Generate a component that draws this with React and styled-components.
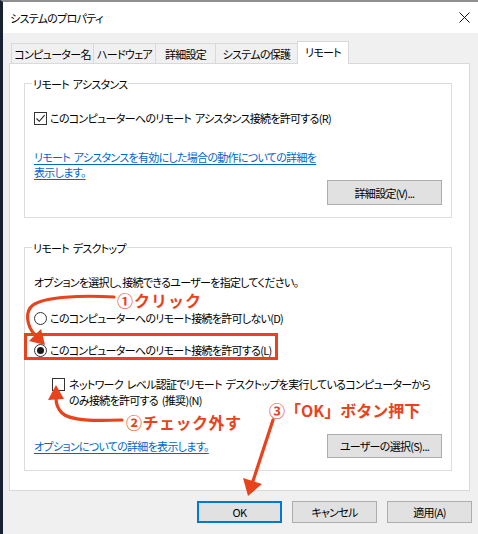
import React from 'react';
import styled, { createGlobalStyle } from 'styled-components';

const Global = createGlobalStyle`
  html, body { margin: 0; padding: 0; background: #f0f0f0; }
  body {
    font-family: "Noto Sans CJK JP", "Noto Sans", sans-serif;
    font-size: 11px;
    color: #000;
  }
  #root { width: 478px; height: 534px; overflow: hidden; }
`;

const Screen = styled.div`
  position: relative;
  width: 478px;
  height: 534px;
  overflow: hidden;
`;

const Window = styled.div`
  box-sizing: border-box;
  width: 100%;
  height: 100%;
  border-left: 3px solid #17212f;
  border-top: 2px solid #8f8f8f;
  background: #f0f0f0;
  display: flex;
  flex-direction: column;
  font-size: 11px;
  letter-spacing: -0.7px;
  word-spacing: 2px;
  font-feature-settings: "palt";
`;

const TitleBar = styled.div`
  height: 31px;
  flex-shrink: 0;
  background: #fff;
  display: flex;
  align-items: center;
  justify-content: space-between;
  padding: 0 8px 0 7px;
`;

const Title = styled.span`
  font-size: 11px;
  line-height: 16px;
`;

const Body = styled.div`
  flex: 1;
  display: flex;
  flex-direction: column;
  padding: 8px 8px 0 6px;
`;

const TabStrip = styled.div`
  display: flex;
  align-items: flex-end;
  height: 22px;
  margin-left: 2px;
  position: relative;
  z-index: 2;
`;

const Tab = styled.div`
  box-sizing: border-box;
  width: ${p => p.$w}px;
  height: ${p => (p.$active ? 23 : 20)}px;
  margin-bottom: ${p => (p.$active ? -1 : 0)}px;
  margin-left: -1px;
  border: 1px solid #d9d9d9;
  border-bottom: none;
  background: ${p => (p.$active ? '#fff' : '#f0f0f0')};
  display: flex;
  align-items: center;
  justify-content: center;
  line-height: 16px;
  white-space: nowrap;
  padding-bottom: ${p => (p.$active ? 3 : 0)}px;
  &:first-child { margin-left: 0; }
`;

const Panel = styled.div`
  box-sizing: border-box;
  background: #fff;
  border: 1px solid #d9d9d9;
  padding: 19px 17px 19px 14px;
  display: flex;
  flex-direction: column;
  gap: 29px;
  position: relative;
  z-index: 1;
`;

const Group = styled.div`
  border: 1px solid #dcdcdc;
  padding: 0 9px ${p => p.$pb}px 9px;
  display: flex;
  flex-direction: column;
`;

const Legend = styled.div`
  align-self: flex-start;
  margin: -8px 0 0 -2px;
  padding: 0 1px;
  background: #fff;
  line-height: 16px;
  white-space: nowrap;
`;

const Row = styled.div`
  display: flex;
  align-items: ${p => p.$align || 'center'};
  justify-content: ${p => p.$justify || 'flex-start'};
  gap: ${p => p.$gap ?? 3}px;
  margin-top: ${p => p.$mt || 0}px;
  margin-left: ${p => p.$ml || 0}px;
  line-height: ${p => p.$lh || 16}px;
  white-space: nowrap;
`;

const Text = styled.div`
  line-height: 16px;
  margin-top: ${p => p.$mt || 0}px;
  white-space: nowrap;
`;

const Box = styled.span`
  box-sizing: border-box;
  width: 13px;
  height: 13px;
  flex-shrink: 0;
  border: 1px solid #333;
  background: #fff;
  display: inline-flex;
  align-items: center;
  justify-content: center;
  margin-top: ${p => p.$mt || 0}px;
`;

const Radio = styled.span`
  box-sizing: border-box;
  width: 13px;
  height: 13px;
  flex-shrink: 0;
  border: 1px solid #333;
  border-radius: 50%;
  background: #fff;
  display: inline-flex;
  align-items: center;
  justify-content: center;
  &::after {
    content: "";
    width: 7px;
    height: 7px;
    border-radius: 50%;
    background: ${p => (p.$on ? '#1a1a1a' : 'transparent')};
  }
`;

const Link = styled.a`
  color: #0066cc;
  text-decoration: underline;
  text-underline-offset: 2px;
  line-height: 15px;
  margin-top: ${p => p.$mt || 0}px;
  display: block;
  white-space: nowrap;
`;

const Button = styled.button`
  box-sizing: border-box;
  width: ${p => p.$w}px;
  height: ${p => p.$h || 24}px;
  background: #e1e1e1;
  border: ${p => (p.$default ? '2px solid #0078d7' : '1px solid #adadad')};
  font-family: inherit;
  font-size: 11px;
  letter-spacing: inherit;
  font-feature-settings: "palt";
  color: #000;
  padding: 0;
  margin-top: ${p => p.$mt || 0}px;
  align-self: ${p => p.$self || 'auto'};
`;

const HighlightBox = styled.div`
  box-sizing: border-box;
  width: 254px;
  height: 27px;
  margin: 7px 0 0 -10px;
  border: 3px solid #e8431c;
  padding: 7px 0 0 7px;
`;

const Footer = styled.div`
  display: flex;
  justify-content: flex-end;
  gap: 10px;
  margin: 10px -2px 0 0;
`;

const Overlay = styled.svg`
  position: absolute;
  left: 0;
  top: 0;
  pointer-events: none;
  z-index: 5;
`;

const Note = styled.div`
  position: absolute;
  left: ${p => p.$x}px;
  top: ${p => p.$y}px;
  color: #e8431c;
  font-family: "Noto Sans CJK JP", sans-serif;
  font-weight: 700;
  font-size: 16px;
  line-height: 20px;
  white-space: nowrap;
  z-index: 6;
  letter-spacing: ${p => p.$ls || 0}px;
`;

const Check = () => (
  <svg width="11" height="11" viewBox="0 0 11 11">
    <path d="M1.5 5.5 L4.3 8.3 L9.6 2.2" fill="none" stroke="#222" strokeWidth="1.1" />
  </svg>
);

const CloseIcon = () => (
  <svg width="11" height="11" viewBox="0 0 11 11">
    <path d="M0.5 0.5 L10.5 10.5 M10.5 0.5 L0.5 10.5" stroke="#111" strokeWidth="1" />
  </svg>
);

const RED = '#e8431c';

export default function App() {
  return (
    <Screen>
      <Global />
      <Window>
        <TitleBar>
          <Title>システムのプロパティ</Title>
          <CloseIcon />
        </TitleBar>
        <Body>
          <TabStrip>
            <Tab $w={83}>コンピューター名</Tab>
            <Tab $w={63}>ハードウェア</Tab>
            <Tab $w={61}>詳細設定</Tab>
            <Tab $w={83}>システムの保護</Tab>
            <Tab $w={52} $active>リモート</Tab>
          </TabStrip>
          <Panel>
            <Group $pb={12}>
              <Legend>リモート アシスタンス</Legend>
              <Row $mt={18}>
                <Box><Check /></Box>
                <span>このコンピューターへのリモート アシスタンス接続を許可する(R)</span>
              </Row>
              <Link $mt={24}>
                リモート アシスタンスを有効にした場合の動作についての詳細を<br />表示します。
              </Link>
              <Button $w={115} $h={25} $self="flex-end">詳細設定(V)...</Button>
            </Group>
            <Group $pb={12}>
              <Legend>リモート デスクトップ</Legend>
              <Text $mt={18}>オプションを選択し、接続できるユーザーを指定してください。</Text>
              <Row $mt={20}>
                <Radio />
                <span>このコンピューターへのリモート接続を許可しない(D)</span>
              </Row>
              <HighlightBox>
                <Row $lh={14}>
                  <Radio $on />
                  <span>このコンピューターへのリモート接続を許可する(L)</span>
                </Row>
              </HighlightBox>
              <Row $mt={16} $ml={18} $align="flex-start" $gap={4}>
                <Box $mt={2} />
                <span>
                  ネットワーク レベル認証でリモート デスクトップを実行しているコンピューターから
                  <br />
                  のみ接続を許可する (推奨)(N)
                </span>
              </Row>
              <Row $mt={26} $justify="space-between">
                <Link>オプションについての詳細を表示します。</Link>
                <Button $w={115}>ユーザーの選択(S)...</Button>
              </Row>
            </Group>
          </Panel>
          <Footer>
            <Button $w={85} $h={22} $default>OK</Button>
            <Button $w={85} $h={22}>キャンセル</Button>
            <Button $w={85} $h={22}>適用(A)</Button>
          </Footer>
        </Body>
      </Window>

      <Overlay width="478" height="534" viewBox="0 0 478 534">
        <path d="M114 297 C 80 295, 45 297, 33 305 C 25 311, 26 325, 35 335"
          fill="none" stroke={RED} strokeWidth="3.2" strokeLinecap="round" />
        <polygon points="45,345 29,341 41,329" fill={RED} />
        <path d="M122 420 C 95 421, 70 421, 62 413 C 57 408, 56 403, 56 398"
          fill="none" stroke={RED} strokeWidth="3.2" strokeLinecap="round" />
        <polygon points="56,385 48,400 64,399" fill={RED} />
        <path d="M273 420 L 253 481" fill="none" stroke={RED} strokeWidth="3.2" strokeLinecap="round" />
        <polygon points="248,496 243,478 262,484" fill={RED} />
      </Overlay>
      <Note $x={117} $y={290} $ls={1}>①クリック</Note>
      <Note $x={126} $y={412} $ls={0.5}>②チェック外す</Note>
      <Note $x={269} $y={400}>③「OK」ボタン押下</Note>
    </Screen>
  );
}
